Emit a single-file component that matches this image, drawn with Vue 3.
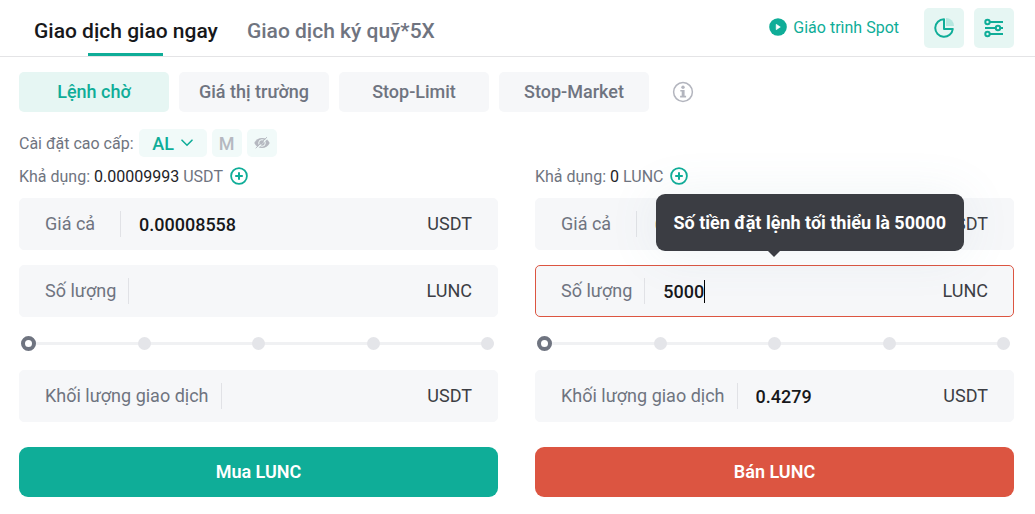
<script setup>
import { ref } from 'vue'

const orderTypes = ['Lệnh chờ', 'Giá thị trường', 'Stop-Limit', 'Stop-Market']
const activeType = ref(0)
const sides = ref([
  {
    id: 'buy', available: '0.00009993', availableUnit: 'USDT', action: 'Mua LUNC',
    price: '0.00008558', amount: '', total: '', percent: 0, error: '',
  },
  {
    id: 'sell', available: '0', availableUnit: 'LUNC', action: 'Bán LUNC',
    price: '0.00008558', amount: '5000', total: '0.4279', percent: 0,
    error: 'Số tiền đặt lệnh tối thiểu là 50000',
  },
])
</script>

<template>
  <main class="panel">
    <header class="top">
      <nav class="tabs">
        <a href="#spot" class="tab active">Giao dịch giao ngay</a>
        <a href="#margin" class="tab">Giao dịch ký quỹ*5X</a>
      </nav>
      <a href="#guide" class="guide">
        <svg width="18" height="18" viewBox="0 0 18 18" aria-hidden="true">
          <circle cx="9" cy="9" r="8.8" fill="#0fad98" />
          <path d="M7.2 6.3 11.3 9l-4.1 2.7z" fill="#fff" stroke="#fff" stroke-width=".6" stroke-linejoin="round" />
        </svg>
        <span>Giáo trình Spot</span>
      </a>
      <button class="tool" aria-label="Biểu đồ">
        <svg width="20" height="20" viewBox="0 0 20 20" fill="none">
          <path d="M12 0a8 8 0 0 1 8 8h-8z" fill="#b5e7df" />
          <path d="M10 1.2A8.8 8.8 0 1 0 18.8 11H10z" stroke="#0fad98" stroke-width="2" stroke-linejoin="round" />
        </svg>
      </button>
      <button class="tool" aria-label="Cài đặt">
        <svg width="20" height="20" viewBox="0 0 20 20" fill="none" stroke="#0fad98" stroke-width="2">
          <path d="M5.5 4H19M1 10h11M16 10h3M5.5 16H19" />
          <circle cx="3.5" cy="4" r="2.2" /><circle cx="14" cy="10" r="2.2" /><circle cx="3.5" cy="16" r="2.2" />
        </svg>
      </button>
    </header>

    <section class="body">
      <div class="types">
        <button
          v-for="(type, i) in orderTypes" :key="type"
          class="type" :class="{ active: i === activeType }" @click="activeType = i"
        >{{ type }}</button>
        <svg class="info" width="22" height="22" viewBox="0 0 22 22" aria-hidden="true">
          <circle cx="11" cy="11" r="9.4" fill="none" stroke="#b3b5be" stroke-width="1.5" />
          <circle cx="11" cy="6.3" r="1.7" fill="#b3b5be" />
          <path d="M8.3 8.9h4.3v5.9h1.5v1.7H8.1v-1.7h1.6v-4.2H8.3z" fill="#b3b5be" />
        </svg>
      </div>

      <div class="advanced">
        <span class="advanced-label">Cài đặt cao cấp:</span>
        <button class="chip mode">
          AL
          <svg width="12" height="8" viewBox="0 0 12 8" fill="none"><path d="m1 1.2 5 5 5-5" stroke="#0fad98" stroke-width="1.6" stroke-linecap="round" /></svg>
        </button>
        <button class="chip">M</button>
        <button class="chip" aria-label="Ẩn">
          <svg width="16" height="12" viewBox="0 0 16 12" fill="none">
            <path d="M.3 6C2 2.8 4.6 1 8 1s6 1.8 7.7 5c-1.7 3.2-4.3 5-7.7 5S2 9.2.3 6z" fill="#b5b8c0" />
            <circle cx="8" cy="6" r="3.3" stroke="#f1faf9" stroke-width="1" />
            <path d="M2.6 11.7 13.9.7" stroke="#f1faf9" stroke-width="1.2" />
            <path d="M1.7 11.2 13 .2" stroke="#b5b8c0" stroke-width="1" />
            <path d="m6.5 7.3 3-2.9" stroke="#b5b8c0" stroke-width="1.6" />
          </svg>
        </button>
      </div>

      <div class="sides">
        <form v-for="side in sides" :key="side.id" class="side" @submit.prevent>
          <div class="available">
            <span>Khả dụng:</span>
            <b>{{ side.available }}</b>
            <span>{{ side.availableUnit }}</span>
            <button type="button" class="plus" aria-label="Nạp thêm">
              <svg width="18" height="18" viewBox="0 0 18 18" fill="none" stroke="#0fad98" stroke-width="1.8">
                <circle cx="9" cy="9" r="7.9" /><path d="M9 5.2v7.6M5.2 9h7.6" stroke-width="2" />
              </svg>
            </button>
          </div>

          <div class="field">
            <label class="price-label" :for="side.id + '-price'">Giá cả</label>
            <input :id="side.id + '-price'" v-model="side.price" class="value" type="text">
            <span class="unit">USDT</span>
          </div>

          <div class="field" :class="{ invalid: side.error }">
            <label :for="side.id + '-amount'">Số lượng</label>
            <input
              :id="side.id + '-amount'" v-model="side.amount" class="value"
              :class="{ editing: side.error }" type="text"
            >
            <span v-if="side.error" class="caret"></span>
            <span class="unit">LUNC</span>
            <div v-if="side.error" class="tip" role="alert">{{ side.error }}</div>
          </div>

          <div class="slider">
            <div class="marks"><i v-for="n in 5" :key="n"></i></div>
            <input v-model="side.percent" type="range" min="0" max="100" aria-label="Phần trăm">
          </div>

          <div class="field">
            <label :for="side.id + '-total'">Khối lượng giao dịch</label>
            <input :id="side.id + '-total'" v-model="side.total" class="value" type="text">
            <span class="unit">USDT</span>
          </div>

          <button class="submit" :class="side.id">{{ side.action }}</button>
        </form>
      </div>
    </section>
  </main>
</template>

<style>
body { margin: 0; background: #fff; }
</style>

<style scoped>
* { box-sizing: border-box; }
.panel {
  font-family: Roboto, "Noto Sans", sans-serif;
  font-size: 18px;
  color: #6f7480;
  background: #fff;
}
button, input { font: inherit; color: inherit; border: 0; padding: 0; margin: 0; background: none; outline: none; }
button { cursor: pointer; }
a { color: inherit; text-decoration: none; }
svg { display: block; flex: none; }

.top {
  display: flex;
  align-items: center;
  height: 57px;
  padding: 0 21px 0 34px;
  border-bottom: 1px solid #e4e4e6;
}
.tabs { display: flex; align-self: stretch; gap: 29px; margin-right: auto; }
.tab {
  display: flex;
  flex-direction: column;
  align-items: center;
  justify-content: space-between;
  padding-top: 16px;
  font-size: 21px;
  line-height: 30px;
  font-weight: 500;
  white-space: nowrap;
}
.tab.active { color: #17181b; }
.tab.active::after { content: ""; width: 75px; height: 3px; background: #0fad98; }
.guide { display: flex; align-items: center; gap: 6px; margin-right: 25px; padding-bottom: 2px; font-size: 16px; color: #0fad98; white-space: nowrap; }
.tool { display: grid; place-items: center; width: 40px; height: 40px; border-radius: 5px; background: #e6f6f3; }
.tool + .tool { margin-left: 10px; }

.body { padding: 15px 21px 17px 19px; }
.types { display: flex; align-items: center; gap: 10px; }
.type { width: 150px; height: 40px; padding-bottom: 2px; border-radius: 5px; background: #f6f7f9; font-weight: 500; white-space: nowrap; }
.type.active { background: #e6f6f3; color: #0fad98; }
.info { margin-left: 13px; }

.advanced { display: flex; align-items: center; gap: 5px; margin-top: 17px; height: 28px; }
.advanced-label { font-size: 16px; white-space: nowrap; }
.chip { display: flex; align-items: center; justify-content: center; width: 30px; height: 28px; border-radius: 5px; background: #f1faf9; color: #b5b8c0; font-weight: 500; }
.chip.mode { gap: 7px; width: 68px; color: #0fad98; }

.sides { display: grid; grid-template-columns: 1fr 1fr; gap: 37px; }
.side { display: flex; flex-direction: column; min-width: 0; }
.available { display: flex; align-items: center; gap: 4px; height: 41px; padding-bottom: 3px; font-size: 16px; white-space: nowrap; }
.available b { font-weight: 400; color: #222327; }
.plus { margin-left: 3px; }

.field {
  position: relative;
  display: flex;
  align-items: center;
  height: 52px;
  padding: 0 25px;
  border: 1px solid #f6f7f9;
  border-radius: 5px;
  background: #f6f7f9;
}
.field + .field { margin-top: 15px; }
.field.invalid { border: 1px solid #dc5541; }
.field label {
  flex: none;
  padding-right: 12px;
  border-right: 1px solid #e1e2e6;
  line-height: 26px;
  white-space: nowrap;
}
.field .price-label { min-width: 76px; }
.value { flex: 1; min-width: 0; margin-left: 18px; color: #17181b; font-weight: 500; }
.value.editing { flex: none; field-sizing: content; }
.caret { width: 1px; height: 23px; background: #000; }
.unit { margin-left: auto; color: #3c3e44; line-height: 24px; }
.tip {
  position: absolute;
  bottom: calc(100% + 15px);
  left: calc(50% - 119px);
  z-index: 2;
  padding: 0 18px;
  border-radius: 9px;
  background: #3b3d43;
  box-shadow: 0 2px 50px rgba(90, 140, 160, .1);
  color: #fff;
  line-height: 57px;
  font-weight: 700;
  white-space: nowrap;
}
.tip::after {
  content: "";
  position: absolute;
  top: 100%;
  left: 112px;
  border: 6px solid transparent;
  border-top-color: #3b3d43;
}

.slider { display: grid; align-items: center; height: 53px; padding: 0 2px; }
.slider > * { grid-area: 1 / 1; }
.marks {
  display: flex;
  align-items: center;
  justify-content: space-between;
  margin: 0 2px;
  background: linear-gradient(#f0f1f3, #f0f1f3) center / 100% 3px no-repeat;
}
.marks i { width: 13px; height: 13px; border-radius: 50%; background: #e4e5e9; }
.slider input { appearance: none; width: 100%; height: 15px; background: transparent; }
.slider input::-webkit-slider-thumb {
  appearance: none;
  width: 15px;
  height: 15px;
  border: 4px solid #6f7480;
  border-radius: 50%;
  background: #fff;
}

.submit { height: 50px; margin-top: 25px; padding-bottom: 2px; border-radius: 9px; color: #fff; font-weight: 600; }
.submit.buy { background: #0fad98; }
.submit.sell { background: #dc5541; }
</style>
